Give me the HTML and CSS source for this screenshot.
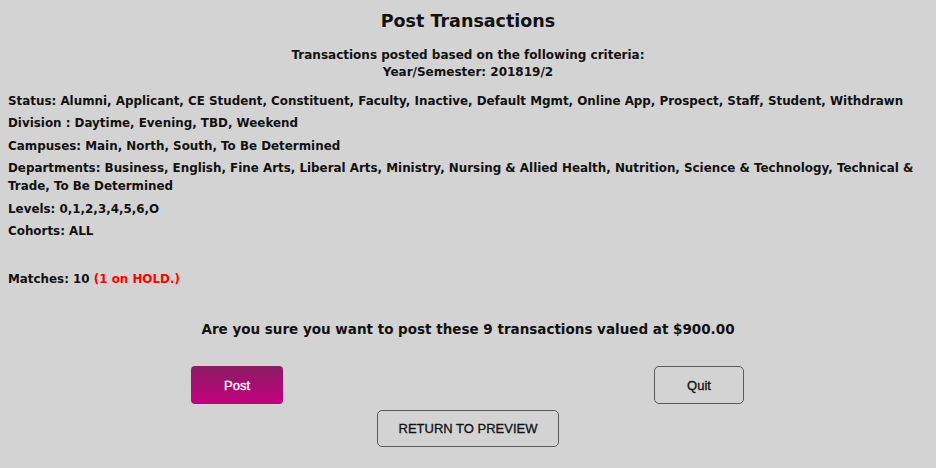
FILE: index.html
```html
<!DOCTYPE html>
<html>
<head>
<meta charset="utf-8">
<link rel="stylesheet" href="styles.css">
</head>
<body>
<div class="page">
  <h1 class="title">Post Transactions</h1>
  <div class="criteria-head">
    <div>Transactions posted based on the following criteria:</div>
    <div>Year/Semester: 201819/2</div>
  </div>
  <div class="criteria">
    <p>Status: Alumni, Applicant, CE Student, Constituent, Faculty, Inactive, Default Mgmt, Online App, Prospect, Staff, Student, Withdrawn</p>
    <p>Division : Daytime, Evening, TBD, Weekend</p>
    <p>Campuses: Main, North, South, To Be Determined</p>
    <p>Departments: Business, English, Fine Arts, Liberal Arts, Ministry, Nursing &amp; Allied Health, Nutrition, Science &amp; Technology, Technical &amp; Trade, To Be Determined</p>
    <p>Levels: 0,1,2,3,4,5,6,O</p>
    <p>Cohorts: ALL</p>
    <p class="matches">Matches: 10 <span class="hold">(1 on HOLD.)</span></p>
  </div>
  <div class="question">Are you sure you want to post these 9 transactions valued at $900.00</div>
  <div class="actions">
    <div class="cell cell-left"><button class="btn btn-post">Post</button></div>
    <div class="cell cell-right"><button class="btn btn-quit">Quit</button></div>
  </div>
  <div class="return-row"><button class="btn btn-return">RETURN TO PREVIEW</button></div>
</div>
</body>
</html>
```
FILE: styles.css
```css
html, body {
  margin: 0;
  padding: 0;
  background: #d3d3d3;
}
body {
  font-family: "DejaVu Sans", "Liberation Sans", sans-serif;
  color: #111;
}
.page {
  padding: 8px;
}
.title {
  margin: 1px 0 0;
  text-align: center;
  font-size: 17.5px;
  line-height: 24px;
  font-weight: bold;
}
.criteria-head {
  margin-top: 13.5px;
  text-align: center;
  font-size: 12px;
  line-height: 17.5px;
  font-weight: bold;
}
.criteria {
  margin-top: 10px;
  font-size: 11.9px;
  font-weight: bold;
}
.criteria p {
  margin: 0 0 4.6px;
  line-height: 18px;
}
.criteria .matches {
  margin-top: 30px;
}
.hold {
  color: #f00;
}
.question {
  margin-top: 31px;
  text-align: center;
  font-size: 13.5px;
  font-weight: bold;
  line-height: 20px;
}
.actions {
  margin-top: 27px;
  display: grid;
  grid-template-columns: 1fr 1fr;
}
.cell {
  display: flex;
  justify-content: center;
}
.cell-left {
  padding-right: 2px;
}
.cell-right {
  padding-left: 2px;
}
.btn {
  font-family: "Liberation Sans", Arial, sans-serif;
  font-size: 13px;
  -webkit-text-stroke: 0.3px currentColor;
  cursor: pointer;
  padding: 0;
}
.btn-post {
  width: 92px;
  height: 38px;
  border: none;
  border-radius: 4px;
  color: #fff;
  background: linear-gradient(#8b1d63, #c2007f);
}
.btn-quit {
  width: 90px;
  height: 38px;
  border: 1px solid #5a5a5a;
  border-radius: 5px;
  background: transparent;
  color: #111;
}
.return-row {
  margin-top: 6px;
  display: flex;
  justify-content: center;
}
.btn-return {
  width: 182px;
  height: 37px;
  border: 1px solid #5a5a5a;
  border-radius: 5px;
  background: transparent;
  color: #111;
}
```
